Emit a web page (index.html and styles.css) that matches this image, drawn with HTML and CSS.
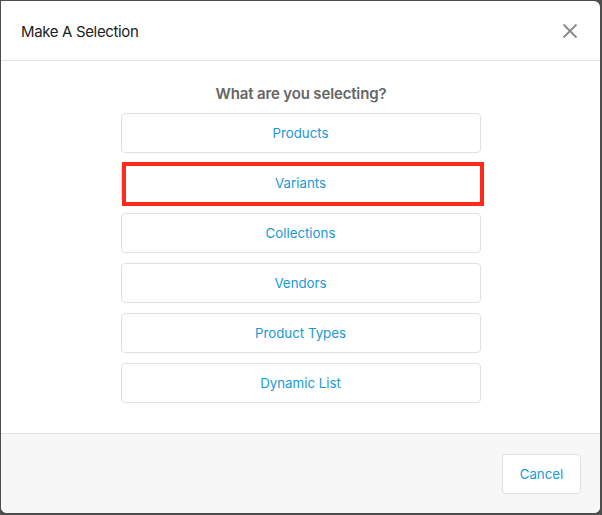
FILE: index.html
```html
<!DOCTYPE html>
<html>
<head>
<meta charset="utf-8">
<link rel="stylesheet" href="styles.css">
</head>
<body>
<div class="modal">
  <div class="modal-header">
    <div class="title">Make A Selection</div>
    <button class="close" aria-label="Close">
      <svg width="16" height="16" viewBox="0 0 16 16"><path d="M1.5 1.5 L14.5 14.5 M14.5 1.5 L1.5 14.5" stroke="#8a8a8a" stroke-width="1.8" fill="none"/></svg>
    </button>
  </div>
  <div class="modal-body">
    <div class="question">What are you selecting?</div>
    <div class="options">
      <button class="option">Products</button>
      <button class="option highlighted">Variants</button>
      <button class="option">Collections</button>
      <button class="option">Vendors</button>
      <button class="option">Product Types</button>
      <button class="option">Dynamic List</button>
    </div>
  </div>
  <div class="modal-footer">
    <button class="cancel">Cancel</button>
  </div>
</div>
</body>
</html>
```

FILE: styles.css
```css
html, body {
  margin: 0;
  padding: 0;
}
body {
  width: 602px;
  height: 515px;
  background: #4d4d4d;
  font-family: Inter, "Liberation Sans", sans-serif;
  padding: 1px 2px 2px 1px;
  box-sizing: border-box;
}
.modal {
  background: #fff;
  width: 599px;
  height: 512px;
  border-radius: 0 6px 6px 6px;
  display: flex;
  flex-direction: column;
  overflow: hidden;
}
.modal-header {
  height: 59px;
  border-bottom: 1px solid #e3e3e3;
  display: flex;
  align-items: center;
  justify-content: space-between;
  padding: 0 22px 0 20px;
  flex-shrink: 0;
}
.title {
  font-size: 15px;
  color: #222;
  letter-spacing: -0.35px;
  padding-top: 1px;
}
.close {
  background: none;
  border: 0;
  padding: 0;
  width: 16px;
  height: 16px;
  display: flex;
  cursor: pointer;
}
.modal-body {
  flex: 1;
  display: flex;
  flex-direction: column;
  align-items: center;
  padding-top: 23px;
}
.question {
  font-size: 15px;
  font-weight: 600;
  color: #666;
  letter-spacing: -0.15px;
  margin-bottom: 10px;
  margin-left: 1px;
}
.options {
  display: flex;
  flex-direction: column;
  gap: 10px;
  width: 360px;
}
.option {
  height: 40px;
  background: #fff;
  border: 1px solid #e0e0e0;
  border-radius: 4px;
  font-family: inherit;
  font-size: 13.3px;
  color: #1a99d4;
  cursor: pointer;
  padding: 0;
}
.option.highlighted {
  position: relative;
}
.option.highlighted::after {
  content: "";
  position: absolute;
  left: 0;
  top: -2px;
  width: 362px;
  height: 44px;
  border: 4px solid #ff2a1a;
  box-sizing: border-box;
  pointer-events: none;
}
.modal-footer {
  height: 79px;
  flex-shrink: 0;
  background: #f7f7f7;
  border-top: 1px solid #e3e3e3;
  display: flex;
  align-items: center;
  justify-content: flex-end;
  padding: 0 19px 0 0;
}
.cancel {
  width: 79px;
  height: 40px;
  background: #fff;
  border: 1px solid #e0e0e0;
  border-radius: 4px;
  font-family: inherit;
  font-size: 13.3px;
  color: #1a99d4;
  cursor: pointer;
  padding: 0;
  margin-top: 1px;
}
```
